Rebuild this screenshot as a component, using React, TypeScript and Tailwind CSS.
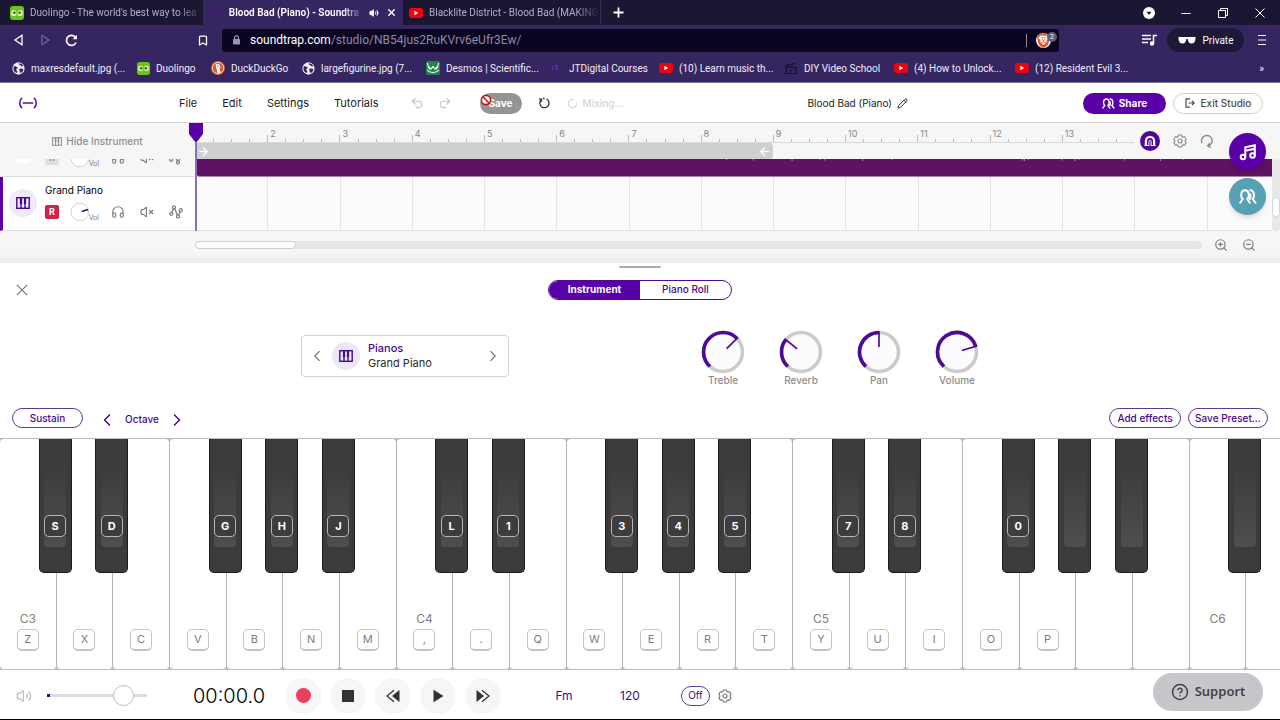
import React from "react";
import {
  ArrowLeft,
  ArrowRight,
  Bookmark,
  ChevronLeft,
  ChevronRight,
  CircleHelp,
  Headphones,
  LoaderCircle,
  Pencil,
  Redo2,
  Undo2,
  VolumeX,
  Volume2,
  X,
  ZoomIn,
  ZoomOut,
} from "lucide-react";
import { SiBrave } from "react-icons/si";

type IconProps = { className?: string };

/* ---------- small drawings ---------- */

const Duolingo = ({ className = "size-[14px]" }: IconProps) => (
  <svg viewBox="0 0 14 14" className={className}>
    <rect width="14" height="14" rx="3" fill="#6cc31c" />
    <rect x="1.2" y="4" width="5.2" height="6" rx="2.6" fill="#d9f5b8" />
    <rect x="7.6" y="4" width="5.2" height="6" rx="2.6" fill="#d9f5b8" />
    <circle cx="4.4" cy="6.8" r="1.3" fill="#3a5a1c" />
    <circle cx="9.6" cy="6.8" r="1.3" fill="#3a5a1c" />
    <path d="M5.8 8.4h2.4L7 10.2z" fill="#f5a623" />
  </svg>
);

const YouTube = ({ className = "h-[10px] w-[14px]" }: IconProps) => (
  <svg viewBox="0 0 14 10" className={className}>
    <rect width="14" height="10" rx="2.4" fill="#f00310" />
    <path d="M5.4 2.8v4.4L9.2 5z" fill="#fff" />
  </svg>
);

const Globe = ({ className = "size-[13px]" }: IconProps) => (
  <svg viewBox="0 0 14 14" className={className}>
    <circle cx="7" cy="7" r="6.6" fill="#f1eef8" />
    <path d="M2 4.6c1.6-.5 2.2.4 3.5.9 1.2.4.6 1.7-.4 1.9-1 .3-.6 1.6.2 2.1.8.6.2 2-.6 2.3A5.8 5.8 0 0 1 2 4.6z" fill="#33255f" />
    <path d="M7.2 1.4c-.4 1.2.6 1.5 1.6 1.7.9.2.4 1.4 1.4 1.6 1 .1 1.2-.9 2.2-.3A5.8 5.8 0 0 0 7.2 1.4z" fill="#33255f" />
    <path d="M8.4 7.2c1.4-.4 2.5.2 3.9.6-.2 1.8-1.4 3.5-3 4.2-.2-1-1.1-1.3-1.3-2.5-.1-.9-.3-1.9.4-2.3z" fill="#33255f" />
  </svg>
);

const Duck = ({ className = "size-[14px]" }: IconProps) => (
  <svg viewBox="0 0 14 14" className={className}>
    <circle cx="7" cy="7" r="7" fill="#de5833" />
    <circle cx="7" cy="7" r="5.7" fill="none" stroke="#f6d9cf" strokeWidth="0.9" />
    <path d="M4.6 3.4c1.7-1.2 4.3-.4 4.5 2.1.1 1.3-.5 1.6-.3 2.7l.9 3.9-3.1.4z" fill="#fff" />
    <path d="M7.6 6.2c1.3-.5 2.6-.1 2.6.3s-1.4.9-2.6.8z" fill="#fcc63b" />
    <circle cx="6.9" cy="4.9" r="0.6" fill="#2d4f8e" />
  </svg>
);

const Desmos = ({ className = "size-[14px]" }: IconProps) => (
  <svg viewBox="0 0 14 14" className={className}>
    <rect width="14" height="14" rx="1.5" fill="#1e8449" />
    <path d="M1.500 2c.5 4.500 2 7.500 4 5.500l1.500-2 1.500 2c2 2 3.500-1 4-5.500M1 9c3 3.500 9 3.500 12 0M3 5.500l2 3M11 5.500l-2 3" fill="none" stroke="#fff" strokeWidth="1.1" />
  </svg>
);

const Courses = ({ className = "size-[14px]" }: IconProps) => (
  <svg viewBox="0 0 14 14" className={className}>
    <path d="M4 4.500v3.500q0 1.500-1.500 1.500M5.500 4.500h4M7.500 4.500v5M6 7h3" fill="none" stroke="#6b2bb0" strokeWidth="1" />
  </svg>
);

const Clapper = ({ className = "size-[14px]" }: IconProps) => (
  <svg viewBox="0 0 14 14" className={className} fill="none" stroke="#15102b" strokeWidth="1.2">
    <path d="M2 6.500h10v6H2zM2 6.300 1.700 4.600 11.400 2.200M4.500 4l.8 2M7.500 3.300l.8 2.500" />
    <path d="M6 8.200v2.600L8.400 9.500z" fill="#15102b" stroke="none" />
  </svg>
);

const Bridge = ({ className = "h-[14px] w-[22px]", color = "#5a0ea8" }: IconProps & { color?: string }) => (
  <svg viewBox="0 0 22 14" className={className} fill="none" stroke={color} strokeWidth="1.8" strokeLinecap="round">
    <path d="M3.500 1.500Q-.9 7 3.500 12.500M18.500 1.500Q22.900 7 18.500 12.500M5.500 7h11" />
  </svg>
);

const Keys = ({ className = "size-[14px]" }: IconProps) => (
  <svg viewBox="0 0 14 12" className={className} fill="none" stroke="currentColor" strokeWidth="1.4">
    <rect x="0.8" y="0.7" width="12.4" height="10.6" />
    <path d="M5 6.500v5M9 6.500v5" />
    <path d="M3.900 .6h2.200v6.300H3.900zM7.900 .6h2.200v6.300H7.900z" fill="currentColor" stroke="none" />
  </svg>
);

const People = ({ className = "h-[12px] w-[14px]" }: IconProps) => (
  <svg viewBox="0 0 18 15" className={className} fill="none" stroke="currentColor" strokeWidth="2" strokeLinecap="round" strokeLinejoin="round">
    <path d="M1.200 13.800 3.800 10C1.200 8 1.600 1.300 6 1.300S10.800 8 8.200 10l2.600 3.800" />
    <path d="M11.300 1.300c4.200.2 4.600 6.700 2.300 8.700l2.900 3.800M11.300 5.300c.5 1.800.2 3-.4 4.700" />
  </svg>
);

const Gear = ({ className = "size-[14px]" }: IconProps) => (
  <svg viewBox="0 0 16 16" className={className} fill="none" stroke="currentColor" strokeWidth="1.3" strokeLinejoin="round">
    <path d="M6.300 1.200h3.400l.6 1.700 1.200.7 1.800-.4 1.600 2.900L13.700 8l1.200 1.900-1.600 2.900-1.800-.4-1.200.7-.6 1.700H6.300l-.6-1.700-1.200-.7-1.800.4-1.600-2.900L2.300 8 1.100 6.100l1.600-2.900 1.800.4 1.200-.7z" />
    <circle cx="8" cy="8" r="2.3" />
  </svg>
);

const Automation = ({ className = "h-[14px] w-[14px]" }: IconProps) => (
  <svg viewBox="0 0 14 14" className={className} fill="none" stroke="currentColor" strokeWidth="1.3">
    <circle cx="2.2" cy="8.8" r="1.5" />
    <circle cx="5" cy="2.4" r="1.5" />
    <circle cx="11.8" cy="5.2" r="1.5" />
    <circle cx="9" cy="11.4" r="1.5" />
    <path d="M2.800 7.400 4.400 3.900M5.600 3.800l2.800 6.200M9.600 10l1.600-3.400" />
  </svg>
);

const Note = ({ className = "size-[18px]" }: IconProps) => (
  <svg viewBox="0 0 18 18" className={className} fill="none" stroke="currentColor" strokeWidth="2">
    <circle cx="4" cy="14" r="2.3" />
    <circle cx="13.5" cy="12.5" r="2.3" />
    <path d="M6.300 14V4.300L15.800 2.200v10.300M6.300 7.800l9.500-2" />
  </svg>
);

const Magnet = ({ className = "size-[12px]" }: IconProps) => (
  <svg viewBox="0 0 12 12" className={className} fill="none" stroke="#fff">
    <path d="M1.900 11V6a4.100 4.100 0 0 1 8.200 0v5" strokeWidth="2.2" />
    <path d="M4.900 11V6.500a1.100 1.100 0 0 1 2.200 0V11M.5 10.500h4.400M7.100 10.500h4.400" strokeWidth="1" />
  </svg>
);

const LoopArrow = ({ className = "size-[14px]" }: IconProps) => (
  <svg viewBox="0 0 14 14" className={className} fill="none" stroke="currentColor" strokeWidth="1.4">
    <path d="M2 9A5.300 5.300 0 1 1 8.200 11.900M9.800 9.300 7.600 11.900l3 1.700" />
  </svg>
);

/* ---------- browser chrome ---------- */

const bookmarks = [
  { label: "maxresdefault.jpg (...", icon: <Globe />, width: "w-[125px]" },
  { label: "Duolingo", icon: <Duolingo className="size-[13px]" />, width: "w-[74px]" },
  { label: "DuckDuckGo", icon: <Duck />, width: "w-[91px]" },
  { label: "largefigurine.jpg (7...", icon: <Globe />, width: "w-[124px]" },
  { label: "Desmos | Scientific...", icon: <Desmos />, width: "w-[123px]" },
  { label: "JTDigital Courses", icon: <Courses />, width: "w-[110px]" },
  { label: "(10) Learn music th...", icon: <YouTube />, width: "w-[125px]" },
  { label: "DIY Video School", icon: <Clapper />, width: "w-[110px]" },
  { label: "(4) How to Unlock...", icon: <YouTube />, width: "w-[121px]" },
  { label: "(12) Resident Evil 3...", icon: <YouTube />, width: "w-[124px]" },
];

function TabStrip() {
  return (
    <div className="flex h-[25px] items-stretch bg-[#1b1733] text-[10px] text-[#b3afc6]">
      <div className="flex w-[203px] items-center gap-[6px] pl-[10px]">
        <Duolingo />
        <span className="flex-1 overflow-hidden whitespace-nowrap [mask-image:linear-gradient(to_right,black_85%,transparent)]">
          Duolingo - The world's best way to lea
        </span>
      </div>
      <div className="flex w-[200px] items-center bg-[#352561] px-[6px] font-semibold text-white">
        <Bridge className="h-[8px] w-[14px]" color="#4a1591" />
        <span className="ml-[6px] w-[136px] overflow-hidden whitespace-nowrap [mask-image:linear-gradient(to_right,black_85%,transparent)]">
          Blood Bad (Piano) - Soundtra
        </span>
        <Volume2 className="ml-[6px] size-[10px] fill-white" />
        <button aria-label="Close tab" className="ml-[7px]">
          <X className="size-[11px]" strokeWidth={3} />
        </button>
      </div>
      <div className="flex w-[198px] items-center gap-[6px] border-r border-[#322b55] pl-[6px]">
        <YouTube />
        <span className="flex-1 overflow-hidden whitespace-nowrap [mask-image:linear-gradient(to_right,black_85%,transparent)]">
          Blacklite District - Blood Bad (MAKING
        </span>
      </div>
      <button aria-label="New tab" className="px-[12px] text-white">
        <svg viewBox="0 0 11 11" className="size-[11px]" stroke="currentColor" strokeWidth="1.8">
          <path d="M5.500 .5v10M.5 5.500h10" />
        </svg>
      </button>
      <div className="ml-auto flex items-center gap-[25px] pr-[14px] text-white">
        <svg viewBox="0 0 12 12" className="size-[12px]">
          <circle cx="6" cy="6" r="6" fill="#fff" />
          <path d="M3.500 4.800h5L6 8z" fill="#1b1733" />
        </svg>
        <button aria-label="Minimize">
          <svg viewBox="0 0 12 12" className="size-[12px]" stroke="currentColor"><path d="M1.500 6.500h9" /></svg>
        </button>
        <button aria-label="Restore">
          <svg viewBox="0 0 12 12" className="size-[12px]" fill="none" stroke="currentColor">
            <path d="M1.500 3.500h7v7h-7zM3.500 3.500v-2h7v7h-2" />
          </svg>
        </button>
        <button aria-label="Close window">
          <svg viewBox="0 0 12 12" className="size-[12px]" stroke="currentColor"><path d="m1.500 1.500 9 9m0-9-9 9" /></svg>
        </button>
      </div>
    </div>
  );
}

function AddressBar() {
  return (
    <div className="flex h-[30px] items-center pl-[13px] pr-[13px] text-white">
      <button aria-label="Back">
        <svg viewBox="0 0 12 12" className="size-[12px]" fill="none" stroke="currentColor" strokeWidth="1.3"><path d="M9 1.300v9.400L2 6z" /></svg>
      </button>
      <button aria-label="Forward" className="ml-[14px] text-[#7568a0]">
        <svg viewBox="0 0 12 12" className="size-[12px]" fill="none" stroke="currentColor" strokeWidth="1.2"><path d="M3 1.300v9.400L10 6z" /></svg>
      </button>
      <button aria-label="Reload" className="ml-[14px]">
        <svg viewBox="0 0 13 13" className="size-[13px]" fill="none" stroke="currentColor" strokeWidth="1.7">
          <path d="M11 8.500A5 5 0 1 1 10.500 3.500" />
          <path d="M12 .8v4.400H7.600z" fill="currentColor" stroke="none" />
        </svg>
      </button>
      <button aria-label="Bookmark" className="ml-[119px]">
        <Bookmark className="h-[13px] w-[12px]" strokeWidth={2.5} />
      </button>
      <div className="ml-[13px] flex h-[23px] flex-1 items-center rounded-[3px] bg-[#0b0522] pl-[10px] pr-[2px]">
        <svg viewBox="0 0 9 10" className="h-[10px] w-[9px]" fill="none" stroke="#9a96ab" strokeWidth="1.2">
          <rect x="1" y="4" width="7" height="5.5" rx="0.8" fill="#9a96ab" stroke="none" />
          <path d="M2.600 4.500V2.800a1.900 1.900 0 0 1 3.800 0v1.700" />
        </svg>
        <span className="ml-[9px] text-[12px] text-[#8f8ba3]">
          <span className="text-white">soundtrap.com</span>/studio/NB54jus2RuKVrv6eUfr3Ew/
        </span>
        <span className="ml-auto h-[13px] w-px bg-[#8f8ba3]" />
        <span className="ml-[9px] flex items-center">
          <SiBrave className="size-[15px] rounded-full bg-white text-[#e2572b]" />
          <span className="-ml-[4px] mb-[6px] flex size-[10px] items-center justify-center rounded-full bg-[#5f5e74] text-[7px] text-white">2</span>
        </span>
      </div>
      <svg viewBox="0 0 15 12" className="ml-[83px] h-[12px] w-[15px]" fill="none" stroke="#fff" strokeWidth="1.5">
        <path d="M0 1.500h9M0 5h9M0 8.500h6M11.500 9.500V1.500H15" />
        <circle cx="10" cy="9.5" r="1.5" fill="#fff" />
      </svg>
      <div className="ml-[10px] flex h-[24px] w-[77px] items-center justify-center gap-[7px] rounded-full bg-[#1d1838] text-[10px]">
        <svg viewBox="0 0 18 8" className="h-[8px] w-[18px]" fill="#fff">
          <path d="M.5 1h17v1.500C17.500 5.500 16 7.500 13.500 7.500S10 5.500 9.700 3H8.300C8 5.500 7 7.500 4.500 7.500S.5 5.500.5 2.500z" />
        </svg>
        Private
      </div>
      <button aria-label="Menu" className="ml-[13px]">
        <svg viewBox="0 0 10 12" className="h-[12px] w-[10px]" stroke="#fff" strokeWidth="1.2"><path d="M1 1.500h8M1 6h8M1 10.500h8" /></svg>
      </button>
    </div>
  );
}

function Bookmarks() {
  return (
    <nav className="flex h-[26px] items-center overflow-hidden pl-[12px] text-[10px] text-[#f1eef8]">
      {bookmarks.map((b) => (
        <a key={b.label} href="#" className={`flex shrink-0 items-center gap-[6px] whitespace-nowrap ${b.width}`}>
          {b.icon}
          {b.label}
        </a>
      ))}
      <button aria-label="More bookmarks" className="ml-auto pr-[16px]">»</button>
    </nav>
  );
}

/* ---------- studio header ---------- */

function StudioHeader() {
  return (
    <header className="flex h-[40px] items-center border-b border-[#d4d4d4] bg-white pl-[17px] pr-[17px] pt-px text-[11px] text-[#1b1b1b]">
      <Bridge className="h-[12px] w-[22px]" />
      <nav className="ml-[140px] flex gap-[25px]">
        <button>File</button>
        <button>Edit</button>
        <button>Settings</button>
        <button>Tutorials</button>
      </nav>
      <div className="ml-[31px] flex gap-[14px] text-[#c2c2c2]">
        <button aria-label="Undo"><Undo2 className="size-[14px]" /></button>
        <button aria-label="Redo"><Redo2 className="size-[14px]" /></button>
      </div>
      <div className="relative ml-[28px]">
        <button className="h-[21px] w-[42px] rounded-full bg-[#949494] text-[10px] font-bold text-white">Save</button>
        <svg viewBox="0 0 12 12" className="absolute left-0 top-px size-[12px]" fill="#fff" stroke="#c4161c" strokeWidth="1.6">
          <circle cx="6" cy="6" r="4.6" />
          <path d="m2.800 2.800 6.400 6.400" />
        </svg>
      </div>
      <button aria-label="History" className="ml-[16px]">
        <svg viewBox="0 0 12 12" className="size-[12px]" fill="none" stroke="#333" strokeWidth="1.3">
          <path d="M3.200 2.800A4.600 4.600 0 1 0 8.500 2M1 2.200h2.500v2.600" />
          <path d="M5 1.500h1.500" />
        </svg>
      </button>
      <div className="ml-[17px] flex items-center gap-[5px] text-[10px] font-medium text-[#d5d5d5]">
        <LoaderCircle className="size-[11px]" strokeWidth={2.5} />
        Mixing...
      </div>
      <div className="ml-auto flex items-center gap-[5px] text-[10px]">
        Blood Bad (Piano)
        <button aria-label="Rename"><Pencil className="size-[11px]" /></button>
      </div>
      <button className="ml-[175px] flex h-[21px] w-[83px] items-center justify-center gap-[4px] rounded-full bg-[#5a00a8] text-[10px] font-bold text-white">
        <People className="h-[11px] w-[13px]" />
        Share
      </button>
      <button className="ml-[7px] flex h-[21px] w-[90px] items-center justify-center gap-[6px] rounded-full border border-[#cfcfcf] text-[10px] font-medium text-[#4c4c4c]">
        <svg viewBox="0 0 10 10" className="size-[10px]" fill="none" stroke="currentColor" strokeWidth="1.2">
          <path d="M5 .8H1v8.400h4M3.500 5h5.700M7 2.800 9.200 5 7 7.200" />
        </svg>
        Exit Studio
      </button>
    </header>
  );
}

/* ---------- timeline ---------- */

const measures = [1, 2, 3, 4, 5, 6, 7, 8, 9, 10, 11, 12, 13];
const wavePeaks = [730, 757, 796, 824, 829, 867, 897, 1028, 1030, 1034, 1068, 1081, 1085, 1131, 1167, 1190];

function TrackControls({ name, active }: { name?: string; active: boolean }) {
  return (
    <div className={`flex h-[54px] shrink-0 items-center border-b border-b-[#dedede] pb-px ${active ? "border-l-[3px] border-l-[#5a00a8] bg-white pl-[6px]" : "bg-[#f6f6f6] pl-[9px]"}`}>
      <span className={`flex size-[28px] items-center justify-center rounded-full ${active ? "bg-[#efe9f8] text-[#3f0a87]" : "bg-white text-[#8a8a8a]"}`}>
        <Keys />
      </span>
      <div className="ml-[8px] flex flex-col gap-[2px] pb-px">
        <span className="h-[16px] text-[10px] leading-[16px] text-black">{name}</span>
        <div className="flex h-[24px] items-center text-[#7e7e7e]">
          <button aria-label="Record" className={`flex size-[14px] items-center justify-center rounded-[2px] text-[9px] font-bold ${active ? "bg-[#d3204c] text-white" : "bg-[#e0e0e0] text-[#9a9a9a]"}`}>
            R
          </button>
          <label className="relative ml-[11px] flex w-[29px] items-end">
            <svg viewBox="0 0 20 20" className="size-[20px]">
              <circle cx="10" cy="10" r="9" fill="#fff" stroke="#d2d2d2" />
              {active && <path d="M12 9.500 18.500 7.500" stroke="#2c0a80" strokeWidth="1.6" />}
            </svg>
            <span className="-ml-px text-[7px] leading-[8px]">Vol</span>
            <input type="range" defaultValue={75} className="sr-only" />
          </label>
          <button aria-label="Solo" className="ml-[12px]"><Headphones className="size-[14px]" /></button>
          <button aria-label="Mute" className="ml-[15px]"><VolumeX className="size-[14px]" /></button>
          <button aria-label="Automation" className="ml-[15px]"><Automation /></button>
        </div>
      </div>
    </div>
  );
}

function Timeline() {
  return (
    <section className="relative bg-[#f6f6f6]">
      <div className="flex h-[36px]">
        <button className="flex w-[195px] shrink-0 items-center justify-center gap-[4px] text-[10px] font-medium text-[#8f8f8f]">
          <Keys className="h-[9px] w-[10px]" />
          Hide Instrument
        </button>
        <div className="flex min-w-0 flex-1 flex-col">
          <div className="grid h-[20px] grid-cols-13 border-b border-[#dadada]">
            {measures.map((m) => (
              <div key={m} className="relative flex items-end">
                <span className={`flex-1 border-l border-[#bdbdbd] ${m === 1 ? "h-[3px]" : "h-[7px]"}`} />
                <span className="h-[3px] flex-1 border-l border-[#bdbdbd]" />
                <span className="h-[3px] flex-1 border-l border-[#bdbdbd]" />
                <span className="h-[3px] flex-1 border-l border-[#bdbdbd]" />
                {m > 1 && <span className="absolute left-[3px] top-[5px] text-[9px] leading-[12px] text-[#858585]">{m}</span>}
              </div>
            ))}
          </div>
          <div className="flex h-[16px] w-8/13 items-center justify-between rounded-r-[3px] bg-[#cfcfcf] px-[2px] text-white">
            <ArrowRight className="size-[13px]" strokeWidth={2.5} />
            <ArrowLeft className="size-[13px]" strokeWidth={2.5} />
          </div>
        </div>
        <div className="flex w-[146px] shrink-0 items-center gap-[13px] pl-[6px] text-[#8a8a8a]">
          <button aria-label="Snap to grid" className="flex size-[20px] items-center justify-center rounded-full bg-[#4f059d]"><Magnet /></button>
          <button aria-label="Timeline settings"><Gear /></button>
          <button aria-label="Loop"><LoopArrow /></button>
        </div>
      </div>

      <div className="flex h-[72px]">
        <div className="flex w-[195px] shrink-0 flex-col">
          <div className="flex h-[18px] flex-col justify-end overflow-hidden">
            <TrackControls active={false} />
          </div>
          <TrackControls name="Grand Piano" active />
        </div>
        <div className="flex min-w-0 flex-1 flex-col overflow-hidden border-b border-[#e2e2e2] bg-[#fbfbfb] pl-px">
          <div className="h-[18px] rounded-bl-[4px] border-b border-[#a77fa9] bg-[#5e1264]">
            <svg viewBox="196 0 1084 4" preserveAspectRatio="none" className="block h-[4px] w-full" fill="#b58ab8">
              {wavePeaks.map((x, i) => (
                <rect key={x} x={x} y="0" width="1" height={1 + (i % 3) * 0.5} />
              ))}
            </svg>
          </div>
          <div className="grid w-[calc(100%+8px)] flex-1 grid-cols-15">
            {[...measures, 14, 15].map((m) => (
              <span key={m} className="border-r border-[#e4e4e4]" />
            ))}
          </div>
        </div>
        <div className="flex w-[8px] shrink-0 flex-col rounded-full bg-[#e8e8e8] pt-[38px]">
          <span className="h-[20px] rounded-full border border-[#d5d5d5] bg-white" />
        </div>
      </div>

      <div className="flex h-[32px] items-center bg-linear-to-b from-[#f6f6f6] from-70% to-[#ececec] pb-[4px] pl-[195px] pr-[24px] text-[#7c7c7c]">
        <div className="h-[8px] flex-1 rounded-full bg-[#e6e6e6]">
          <div className="h-full w-[101px] rounded-full border border-[#cfcfcf] bg-white" />
        </div>
        <button aria-label="Zoom in" className="ml-[12px]"><ZoomIn className="size-[14px]" /></button>
        <button aria-label="Zoom out" className="ml-[14px]"><ZoomOut className="size-[14px]" /></button>
      </div>

      <div className="absolute left-[189px] top-0 flex w-[14px] flex-col items-center">
        <svg viewBox="0 0 14 20" className="h-[20px] w-[14px]" fill="#5a00a8"><path d="M0 0h14v11L7 20 0 11z" /></svg>
        <span className="h-[88px] w-[2px] bg-[#8a6fb8]" />
      </div>
      <div className="absolute right-[14px] top-[10px] flex flex-col gap-[8px] text-white">
        <button aria-label="Loops library" className="flex size-[37px] items-center justify-center rounded-full bg-[#5a00a8] shadow-md"><Note /></button>
        <button aria-label="Collaborate" className="flex size-[37px] items-center justify-center rounded-full bg-[#58a0b4] shadow-md"><People className="h-[15px] w-[18px]" /></button>
      </div>
    </section>
  );
}

/* ---------- instrument panel ---------- */

function polar(deg: number, r: number) {
  const a = (deg * Math.PI) / 180;
  return `${(22 + r * Math.sin(a)).toFixed(2)} ${(22 - r * Math.cos(a)).toFixed(2)}`;
}

function Knob({ label, angle }: { label: string; angle: number }) {
  const large = angle + 138 > 180 ? 1 : 0;
  return (
    <label className="relative flex w-[44px] flex-col items-center text-[10px] font-medium leading-[12px] text-[#8c8c8c]">
      <svg viewBox="0 0 44 44" className="size-[44px]" fill="none">
        <circle cx="22" cy="22" r="19.5" fill="#fcfbfe" stroke="#cbcbcb" strokeWidth="3.6" />
        <path d={`M${polar(-138, 19.5)}A19.500 19.500 0 ${large} 1 ${polar(angle, 19.5)}`} stroke="#4d0a94" strokeWidth="3.6" />
        <path d={`M${polar(angle, 5)}L${polar(angle, 21)}`} stroke="#4d0a94" strokeWidth="1.7" />
      </svg>
      {label}
      <input type="range" min={-138} max={138} defaultValue={angle} className="sr-only" />
    </label>
  );
}

function InstrumentPanel() {
  const pill = "h-[20px] rounded-full border border-[#5b3a94] text-[10px] font-medium text-[#45098c]";
  return (
    <section className="flex h-[175px] flex-col bg-white text-[#45098c]">
      <div className="flex h-[54px] px-[16px]">
        <button aria-label="Close panel" className="flex flex-1 items-center text-[#777]">
          <svg viewBox="0 0 12 12" className="size-[12px]" stroke="currentColor" strokeWidth="1.2"><path d="m.8.8 10.400 10.400m0-10.400L.8 11.200" /></svg>
        </button>
        <div className="flex flex-col items-center">
          <span className="mt-[3px] h-[2px] w-[42px] rounded-full bg-[#a9a9a9]" />
          <div className="mt-[12px] flex h-[20px] w-[184px] overflow-hidden rounded-full border border-[#4d0a94] text-[10px]">
            <button className="flex-1 bg-[#5a00a8] pb-px font-bold text-white">Instrument</button>
            <button className="flex-1 pb-px font-medium">Piano Roll</button>
          </div>
        </div>
        <span className="flex-1" />
      </div>
      <div className="flex h-[81px] items-start justify-center gap-[192px] pt-[13px]">
        <div className="mt-[5px] flex h-[42px] w-[208px] items-center rounded-[4px] border border-[#d3d3d3] px-[6px]">
          <button aria-label="Previous instrument" className="text-[#777]"><ChevronLeft className="size-[18px]" strokeWidth={1.5} /></button>
          <span className="ml-[6px] flex size-[28px] items-center justify-center rounded-full bg-[#ece6f6]"><Keys /></span>
          <div className="ml-[8px] flex flex-col text-[11px] leading-[15px]">
            <span className="font-medium">Pianos</span>
            <span className="text-[#2b2b2b]">Grand Piano</span>
          </div>
          <button aria-label="Next instrument" className="ml-auto text-[#777]"><ChevronRight className="size-[18px]" strokeWidth={1.5} /></button>
        </div>
        <div className="flex gap-[34px]">
          <Knob label="Treble" angle={46} />
          <Knob label="Reverb" angle={-51} />
          <Knob label="Pan" angle={0} />
          <Knob label="Volume" angle={73} />
        </div>
      </div>
      <div className="flex flex-1 items-center px-[12px]">
        <button className={`${pill} w-[71px]`}>Sustain</button>
        <div className="ml-[14px] flex items-center gap-[8px] pt-[3px]">
          <button aria-label="Octave down"><ChevronLeft className="size-[20px]" strokeWidth={1.8} /></button>
          <span className="w-[34px] text-center text-[10px] font-medium">Octave</span>
          <button aria-label="Octave up"><ChevronRight className="size-[20px]" strokeWidth={1.8} /></button>
        </div>
        <button className={`${pill} ml-auto w-[72px]`}>Add effects</button>
        <button className={`${pill} ml-[7px] w-[80px]`}>Save Preset...</button>
      </div>
    </section>
  );
}

/* ---------- keyboard ---------- */

type PianoKey = { id: number; key?: string; octave?: string; sharp?: string; noSharp?: boolean };

const whiteLabels = ["Z", "X", "C", "V", "B", "N", "M", ",", ".", "Q", "W", "E", "R", "T", "Y", "U", "I", "O", "P"];
const sharpLabels: Record<number, string> = { 0: "S", 1: "D", 3: "G", 4: "H", 5: "J", 7: "L", 8: "1", 10: "3", 11: "4", 12: "5", 14: "7", 15: "8", 17: "0" };

const pianoKeys: PianoKey[] = Array.from({ length: 23 }, (_, i) => ({
  id: i,
  key: whiteLabels[i],
  octave: i % 7 === 0 ? `C${3 + i / 7}` : undefined,
  sharp: sharpLabels[i],
  noSharp: i % 7 === 2 || i % 7 === 6 || i === 22,
}));

function Keyboard() {
  return (
    <section className="h-[232px] overflow-hidden border-y border-[#bdbdbd] bg-[#bdbdbd]">
      <div className="grid h-full w-[101.8%] grid-cols-23">
        {pianoKeys.map((k) => (
          <div key={k.id} className="relative">
            <button className="flex h-full w-full flex-col items-center justify-end rounded-[4px] border-r border-[#b5b5b5] bg-white pb-[18px] text-[#7d7d7d]">
              {k.octave && <span className="text-[12px] leading-[16px]">{k.octave}</span>}
              <span className={`mt-[2px] flex size-[22px] items-center justify-center rounded-[5px] text-[11px] ${k.key ? "border border-b-2 border-[#c4c4c4]" : ""}`}>{k.key}</span>
            </button>
            {!k.noSharp && (
              <button
                aria-label={k.sharp ? undefined : "Sharp key"}
                className="absolute -right-[15px] top-0 z-10 flex h-[134px] w-[33px] justify-center rounded-b-[5px] border border-t-0 border-[#1c1c1c] bg-[#3b3b3b] text-[11px] font-bold text-white"
              >
                <span className="flex h-[108px] w-[22px] items-end rounded-[4px] bg-linear-to-b from-[#3b3b3b] from-20% to-[#4e4e4e] pb-[10px]">
                  {k.sharp && (
                    <span className="flex size-[22px] items-center justify-center rounded-[5px] border border-[#b5b5b5] bg-[#3d3d3d]">{k.sharp}</span>
                  )}
                </span>
              </button>
            )}
          </div>
        ))}
      </div>
    </section>
  );
}

/* ---------- transport ---------- */

function Transport() {
  const round = "flex size-[36px] items-center justify-center rounded-full bg-[#f6f6f6] text-[#333330]";
  return (
    <footer className="relative flex h-[50px] items-center border-b border-black bg-white pl-[16px] pt-[2px] text-[12px] text-[#3b0a80]">
      <Volume2 className="size-[16px] text-[#bdbdbd]" strokeWidth={1.8} />
      <label className="ml-[15px] flex items-center">
        <span className="sr-only">Master volume</span>
        <input
          type="range"
          defaultValue={83}
          className="h-[3px] w-[100px] appearance-none bg-[#dcdcdc] bg-linear-to-r from-[#2c0a80] from-3% to-[#dcdcdc] to-3% [&::-webkit-slider-thumb]:size-[21px] [&::-webkit-slider-thumb]:appearance-none [&::-webkit-slider-thumb]:rounded-full [&::-webkit-slider-thumb]:border [&::-webkit-slider-thumb]:border-[#bdbdbd] [&::-webkit-slider-thumb]:bg-white"
        />
      </label>
      <span className="ml-[46px] w-[92px] text-[20px] font-light text-black">00:00.0</span>
      <div className="flex gap-[9px]">
        <button aria-label="Record" className={round}><span className="size-[15px] rounded-full bg-[#ef3f5c]" /></button>
        <button aria-label="Stop" className={round}><span className="size-[12px] bg-current" /></button>
        <button aria-label="Rewind" className={round}>
          <svg viewBox="0 0 14 14" className="size-[14px]"><path d="M13.500 1v12L6 7z" fill="currentColor" /><path d="M8 1.200 1 7l7 5.800" fill="none" stroke="currentColor" strokeWidth="1.3" /></svg>
        </button>
        <button aria-label="Play" className={round}>
          <svg viewBox="0 0 14 14" className="size-[14px]"><path d="M2.500 .8 12.500 7l-10 6.200z" fill="currentColor" /></svg>
        </button>
        <button aria-label="Forward" className={round}>
          <svg viewBox="0 0 14 14" className="size-[14px]"><path d="M.5 1v12L8 7z" fill="currentColor" /><path d="M6 1.200 13 7l-7 5.800" fill="none" stroke="currentColor" strokeWidth="1.3" /></svg>
        </button>
      </div>
      <button className="ml-[45px] w-[36px] text-center">Fm</button>
      <button className="ml-[30px] w-[36px] text-center">120</button>
      <button className="ml-[33px] h-[20px] w-[29px] rounded-full border border-[#5b3a94] text-[10px]">Off</button>
      <button aria-label="Metronome settings" className="ml-[8px] text-[#777]"><Gear /></button>
      <button className="absolute right-[17px] top-[3px] flex h-[38px] w-[110px] items-center justify-center gap-[6px] rounded-full bg-[#c7c7cb] font-['Noto_Sans',sans-serif] text-[13px] font-semibold text-[#41424a]">
        <CircleHelp className="size-[18px]" />
        Support
      </button>
    </footer>
  );
}

export default function App() {
  return (
    <main className="flex min-h-screen flex-col overflow-hidden bg-white font-['Inter',sans-serif]">
      <div className="h-[83px] border-b border-[#7a7390] bg-[#352561] font-['Roboto',sans-serif]">
        <TabStrip />
        <AddressBar />
        <Bookmarks />
      </div>
      <StudioHeader />
      <Timeline />
      <InstrumentPanel />
      <Keyboard />
      <Transport />
    </main>
  );
}
